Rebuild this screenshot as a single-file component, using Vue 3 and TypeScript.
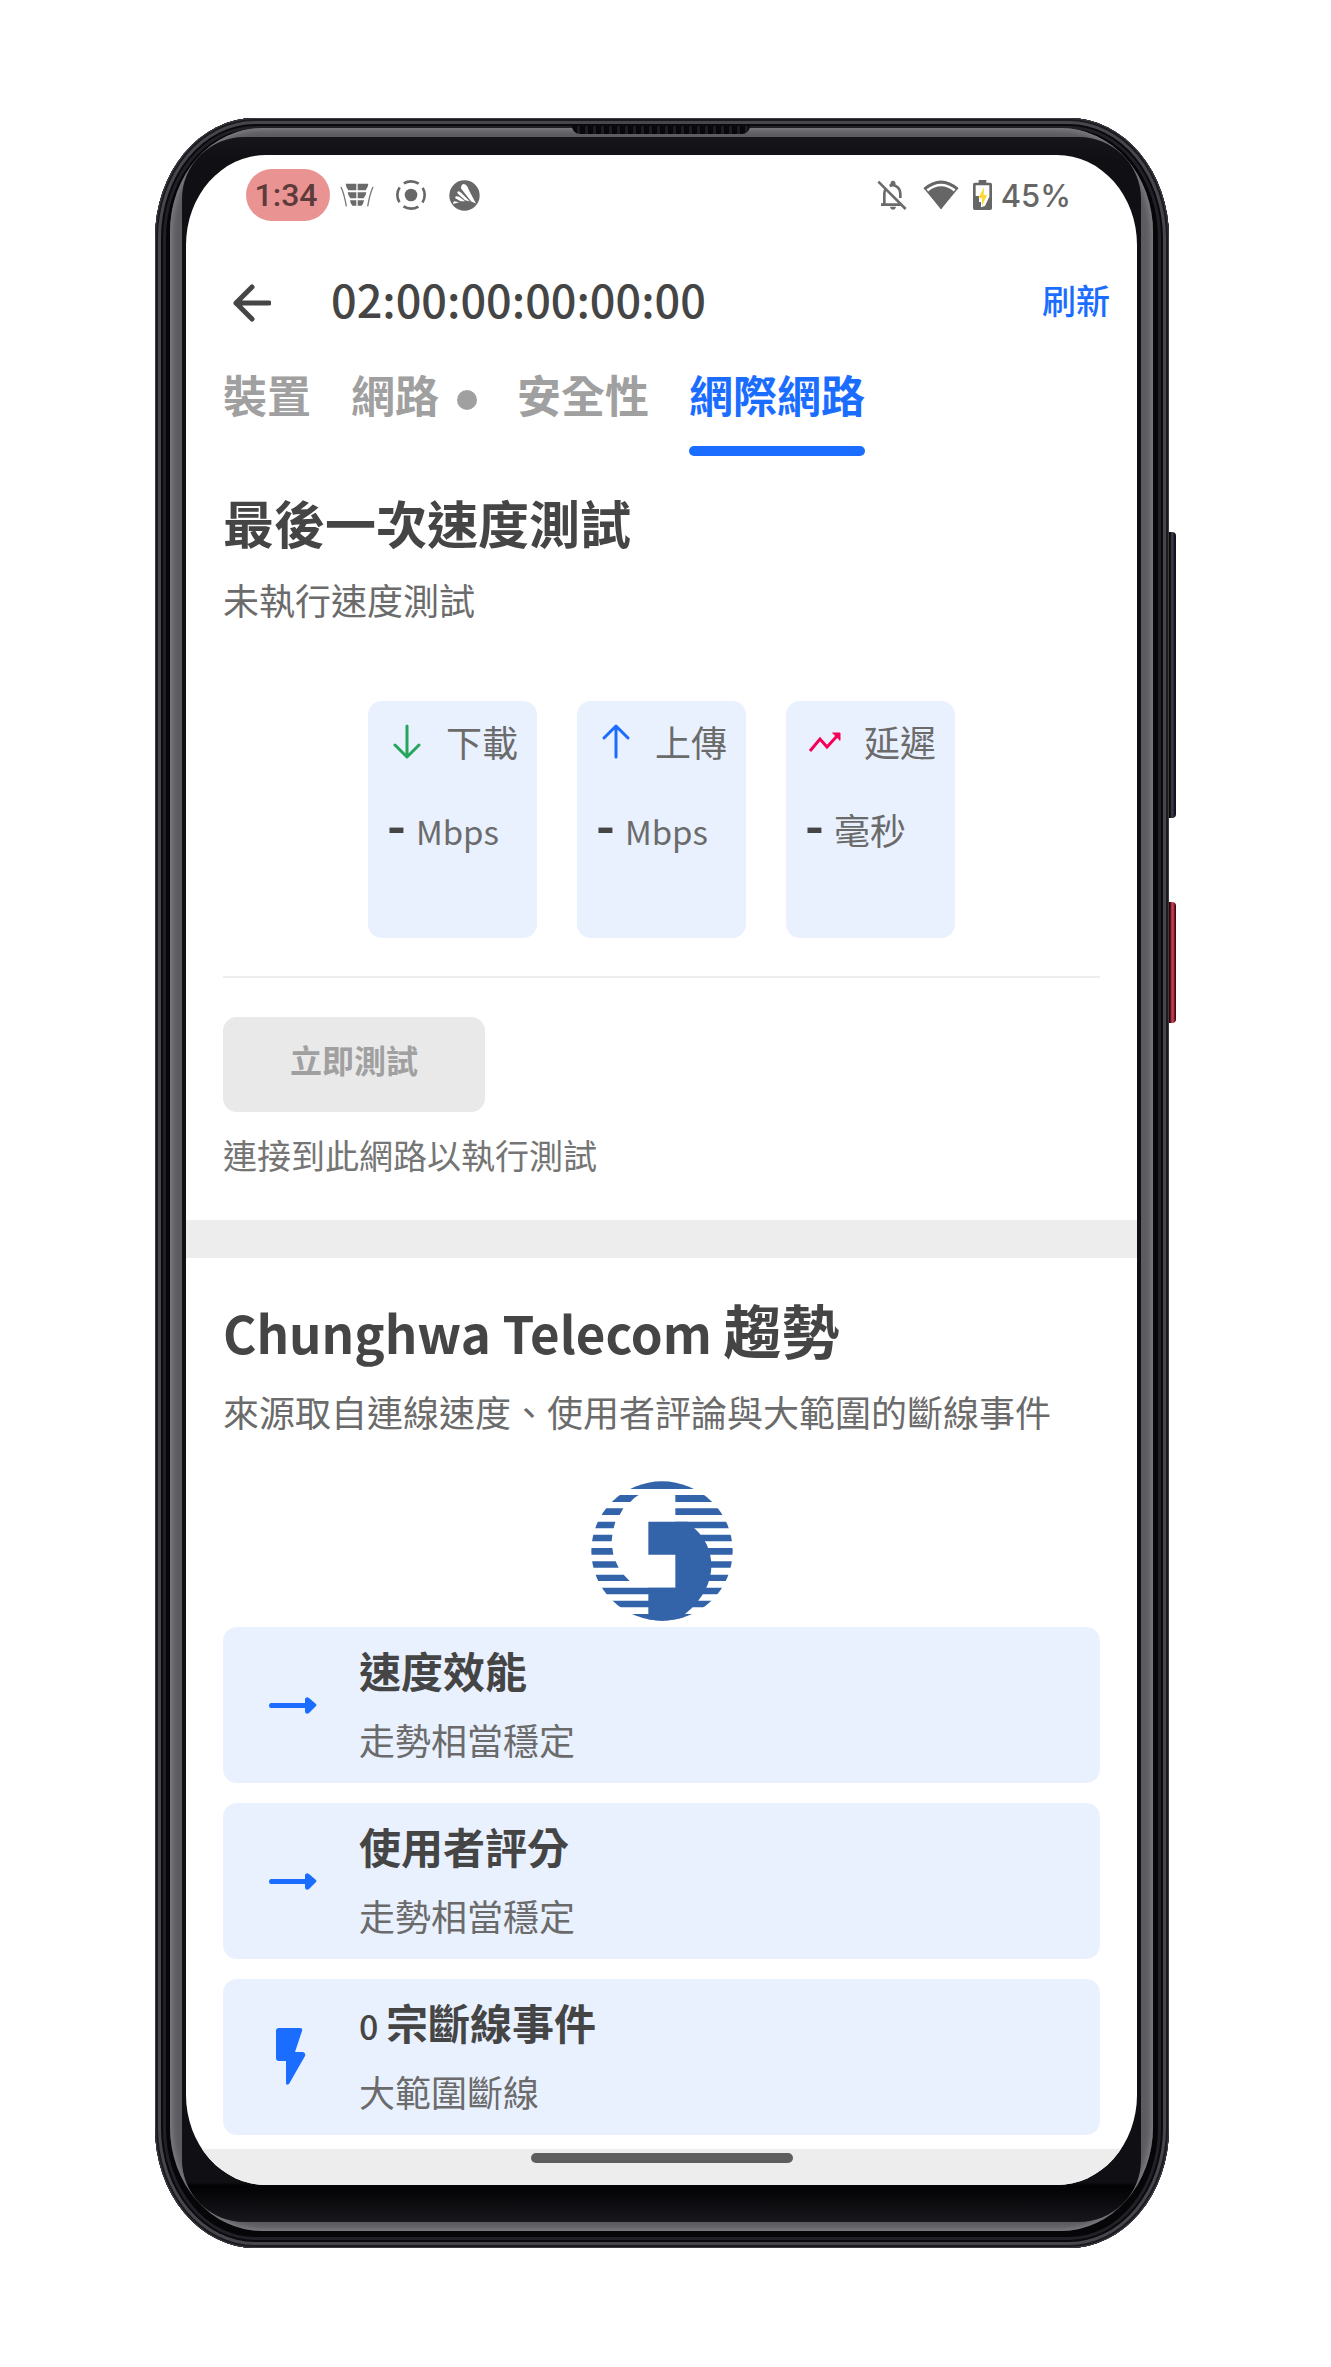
<script setup lang="ts">
interface Tab {
  label: string
  active: boolean
  dot: boolean
}

interface Metric {
  kind: 'down' | 'up' | 'trend'
  label: string
  unit: string
  latin: boolean
}

interface Trend {
  icon: 'arrow' | 'bolt'
  count: string
  title: string
  note: string
}

const tabs: Tab[] = [
  { label: '裝置', active: false, dot: false },
  { label: '網路', active: false, dot: true },
  { label: '安全性', active: false, dot: false },
  { label: '網際網路', active: true, dot: false },
]

const metrics: Metric[] = [
  { kind: 'down', label: '下載', unit: 'Mbps', latin: true },
  { kind: 'up', label: '上傳', unit: 'Mbps', latin: true },
  { kind: 'trend', label: '延遲', unit: '毫秒', latin: false },
]

const trends: Trend[] = [
  { icon: 'arrow', count: '', title: '速度效能', note: '走勢相當穩定' },
  { icon: 'arrow', count: '', title: '使用者評分', note: '走勢相當穩定' },
  { icon: 'bolt', count: '0', title: '宗斷線事件', note: '大範圍斷線' },
]
</script>

<template>
  <div class="stage" lang="zh-Hant">
    <div class="phone">
      <span class="speaker"></span>
      <span class="side volume"></span>
      <span class="side power"></span>
      <div class="rim">
        <div class="bezel">
          <div class="screen">
            <div class="status">
              <span class="clock">1:34</span>
              <svg class="s-vpn" viewBox="0 0 100 72" width="34" height="24" aria-hidden="true">
                <g fill="#6a6a6a">
                  <path d="M16 2H48V22H24Q17 14 16 2ZM52 2H84Q83 14 76 22H52Z" />
                  <path d="M22 28H48V46H30Q23 38 22 28ZM52 28H78Q77 38 70 46H52Z" />
                  <path d="M29 52H48V68H36Q30 62 29 52ZM52 52H71Q70 62 64 68H52Z" />
                </g>
                <path d="M2 12Q12 34 18 70M98 12Q88 34 82 70" fill="none" stroke="#777" stroke-width="4" />
              </svg>
              <svg class="s-rec" viewBox="0 0 90 90" width="30" height="30" aria-hidden="true">
                <circle cx="45" cy="45" r="19" fill="#686868" />
                <circle cx="45" cy="45" r="41" fill="none" stroke="#686868" stroke-width="8" pathLength="360" stroke-dasharray="66 24" stroke-dashoffset="33" />
              </svg>
              <svg class="s-app" viewBox="0 0 92 92" width="31" height="31" aria-hidden="true">
                <circle cx="46" cy="46" r="45" fill="#686868" />
                <path d="M36 20Q38 8 50 14Q55 18 60 32L80 70L66 64L38 28Q34 24 36 20ZM26 34Q30 32 36 38L62 64L48 60L28 42Q22 38 26 34ZM20 49Q24 47 30 50L48 63L34 63L20 55Q16 52 20 49ZM15 63L30 66L12 71Q12 66 15 63Z" fill="#fff" />
              </svg>
              <span class="grow"></span>
              <svg class="s-bell" viewBox="0 0 90 90" width="30" height="30" aria-hidden="true">
                <g fill="none" stroke="#6b6b6b" stroke-width="8">
                  <path d="M4 5L86 87M12 74H74M22 74V40Q22 32 27 26M38 18Q48 12 58 19Q70 26 70 42V54" />
                </g>
                <path d="M40 14Q40 2 48 2T56 14ZM39 80H57Q55 89 48 89T39 80Z" fill="#6b6b6b" />
              </svg>
              <svg class="s-wifi" viewBox="0 0 108 90" width="36" height="30" aria-hidden="true">
                <path d="M4 27Q54 -16 104 27" fill="none" stroke="#666" stroke-width="8" />
                <path d="M2 25L54 88L106 25L98 25Q54 -8 10 25Z" fill="#666" />
                <path d="M13 31Q54 -1 95 31" fill="none" stroke="#fff" stroke-width="8" />
                <path d="M18 40Q54 8 90 40L54 88Z" fill="#666" />
              </svg>
              <svg class="s-batt" viewBox="0 0 57 90" width="19" height="30" aria-hidden="true">
                <path d="M17 0H40V8H52Q57 8 57 14V84Q57 90 52 90H5Q0 90 0 84V14Q0 8 5 8H17Z" fill="#666" />
                <path d="M8 16H49V50L36 78L24 82V66H18V48H8Z" fill="#fff" />
                <path d="M33 22L16 54H27V78L42 45H32Z" fill="#fdd835" />
              </svg>
              <span class="level">45%</span>
            </div>

            <header class="appbar">
              <button class="back" type="button" aria-label="返回">
                <svg viewBox="0 0 38 38" width="38" height="38" aria-hidden="true">
                  <path d="M36 19H3M19 3L3 19L19 35" fill="none" stroke="#454545" stroke-width="5" stroke-linecap="round" stroke-linejoin="round" />
                </svg>
              </button>
              <h1>02:00:00:00:00:00</h1>
              <button class="refresh" type="button">刷新</button>
            </header>

            <nav class="tabs">
              <a v-for="tab in tabs" :key="tab.label" href="#" class="tab" :class="{ active: tab.active }">
                {{ tab.label }}<i v-if="tab.dot" class="dot"></i>
              </a>
            </nav>

            <main>
              <section class="speed">
                <h2>最後一次速度測試</h2>
                <p class="sub">未執行速度測試</p>
                <div class="metrics">
                  <div v-for="m in metrics" :key="m.kind" class="metric">
                    <div class="metric-head">
                      <svg viewBox="0 0 36 36" width="36" height="36" fill="none" stroke-width="3" stroke-linecap="round" stroke-linejoin="round" aria-hidden="true">
                        <path v-if="m.kind === 'down'" d="M20 3V34M8 22L20 34L32 22" stroke="#25a65b" />
                        <path v-else-if="m.kind === 'up'" d="M20 34V3M8 15L20 3L32 15" stroke="#1a6dff" />
                        <g v-else stroke="#f50057">
                          <path d="M5 28L15 16L22 24L32 13" stroke-linecap="butt" stroke-linejoin="miter" />
                          <path d="M28 10H35V17Z" fill="#f50057" stroke-width="1" />
                        </g>
                      </svg>
                      <span>{{ m.label }}</span>
                    </div>
                    <div class="metric-value"><b>-</b><span :class="{ latin: m.latin }">{{ m.unit }}</span></div>
                  </div>
                </div>
                <hr />
                <button class="run" type="button" disabled>立即測試</button>
                <p class="hint">連接到此網路以執行測試</p>
              </section>

              <section class="trends">
                <h2 class="provider"><span>Chunghwa Telecom </span>趨勢</h2>
                <p class="sub">來源取自連線速度、使用者評論與大範圍的斷線事件</p>
                <svg class="logo" viewBox="90 62 426 420" width="142" height="140" role="img" aria-label="Chunghwa Telecom">
                  <defs>
                    <clipPath id="globe"><ellipse cx="303" cy="272" rx="212" ry="209" /></clipPath>
                  </defs>
                  <g clip-path="url(#globe)" fill="#3364aa">
                    <path d="M90 62H516V86H90Z" />
                    <path d="M90 104H233Q218 112 208 125H90ZM90 144H187L176 164H90ZM90 184H163L158 204H90ZM90 223H154L152 243H90ZM90 263H154L157 283H90ZM90 303H164L173 322H90ZM90 343H188L206 362H90ZM90 382H343V402H90ZM90 421H300V441H90ZM90 461H300V482H90Z" />
                    <path d="M343 104H516V125H343ZM343 144H516V164H343ZM343 184H516V204H343ZM400 223H516V243H400ZM430 263H516V283H430ZM430 303H516V322H430ZM430 343H516V362H430ZM420 382H516V402H420ZM390 421H516V441H390ZM300 461H516V482H300Z" />
                    <path d="M262 184H380L400 204C470 265 475 380 372 461V482H262V382H343V283H262Z" />
                  </g>
                </svg>
                <ul>
                  <li v-for="t in trends" :key="t.title">
                    <svg viewBox="0 0 60 60" width="60" height="60" fill="#1a6dff" aria-hidden="true">
                      <path v-if="t.icon === 'arrow'" d="M9 28H43V24Q44 21 47 23L54 29Q55 30 54 31L47 38Q44 40 43 37V33H9Q7 33 7 30.5T9 28Z" />
                      <path v-else d="M17 1H38Q41 1 40 4L33 25H41Q44 26 43 29L27 57Q24 59 24 56V34H17Q14 34 14 31V4Q14 1 17 1Z" />
                    </svg>
                    <div>
                      <h3><span v-if="t.count" class="count">{{ t.count }}&nbsp;</span>{{ t.title }}</h3>
                      <p>{{ t.note }}</p>
                    </div>
                  </li>
                </ul>
              </section>
            </main>
            <footer><span class="home"></span></footer>
          </div>
        </div>
      </div>
    </div>
  </div>
</template>

<style>
body {
  margin: 0;
  background: #fff;
}
</style>

<style scoped>
.stage {
  padding: 118px 162px 118px 155px;
  font-family: "Noto Sans CJK TC", sans-serif;
  color: #454545;
}

.phone {
  position: relative;
  padding: 10px 16px 17px 15px;
  border-radius: 100px / 120px;
  background: #060608;
  box-shadow:
    inset 0 0 0 1px #3c3c42,
    inset 0 0 0 3px #1a1a1f,
    inset 0 0 0 6px #46464c,
    inset 0 0 0 8px #0a0a0d,
    inset 0 0 0 11px #202027;
}

.rim {
  padding: 9px 12px;
  border-radius: 92px / 104px;
  background: #5b5b60;
  box-shadow: inset 0 0 6px 2px #838388;
}

.bezel {
  padding: 18px 4px 37px;
  border-radius: 62px;
  background: linear-gradient(#16151a 0, #101014 24px, #101014 calc(100% - 40px), #020204 calc(100% - 36px), #18171c 100%);
}

.screen {
  overflow: hidden;
  border-radius: 80px / 90px;
  background: #fff;
}

.speaker {
  position: absolute;
  top: 8px;
  left: 50%;
  width: 178px;
  height: 8px;
  margin-left: -90px;
  border-radius: 0 0 8px 8px;
  background: repeating-linear-gradient(90deg, #08080b 0 5px, #1b1b21 5px 8px);
}

.side {
  position: absolute;
  left: 100%;
  width: 7px;
  border-radius: 0 4px 4px 0;
}

.volume {
  top: 414px;
  height: 286px;
  background: linear-gradient(90deg, #08080b 0 1px, #43424a 3px, #120c20 6px);
}

.power {
  top: 784px;
  height: 121px;
  background: linear-gradient(90deg, #2a060c 0 1px, #cf4052 3px, #a92c40 5px, #3a0a12 6px);
}

button {
  padding: 0;
  border: 0;
  background: none;
  font: inherit;
}

h1, h2, h3, p, ul {
  margin: 0;
  padding: 0;
}

svg {
  display: block;
  flex: none;
}

.status {
  display: flex;
  align-items: center;
  height: 52px;
  padding: 14px 66px 0 60px;
  font-family: Roboto, sans-serif;
  font-size: 32px;
  font-weight: 500;
}

.clock {
  box-sizing: border-box;
  width: 84px;
  padding-right: 4px;
  border-radius: 26px;
  background: #ea9393;
  color: #5d3b3b;
  line-height: 52px;
  text-align: center;
}

.s-vpn { margin-left: 10px; }
.s-rec { margin-left: 22px; }
.s-app { margin-left: 23px; }
.s-wifi { margin-left: 16px; }
.s-batt { margin-left: 14px; }

.grow { flex: 1; }

.level {
  margin-left: 9px;
  color: #666;
  font-family: Inter, sans-serif;
  font-size: 31px;
}

.appbar {
  display: flex;
  align-items: center;
  height: 60px;
  margin-top: 52px;
  padding: 0 27px 0 47px;
}

h1 {
  flex: 1;
  margin-left: 60px;
  padding-bottom: 8px;
  font-size: 45px;
  font-weight: 500;
  line-height: 52px;
}

.refresh {
  padding-bottom: 6px;
  color: #1a6dff;
  font-size: 34px;
  font-weight: 500;
  line-height: 52px;
}

.tabs {
  display: flex;
  gap: 40px;
  margin-top: 31px;
  padding: 0 37px;
}

.tab {
  display: flex;
  align-items: center;
  padding-bottom: 22px;
  border-bottom: 10px solid transparent;
  color: #a0a0a0;
  font-size: 44px;
  font-weight: 700;
  line-height: 60px;
  text-decoration: none;
  white-space: nowrap;
}

.tab.active {
  position: relative;
  color: #1a6dff;
}

.tab.active::after {
  content: "";
  position: absolute;
  right: 0;
  bottom: -10px;
  left: 0;
  height: 10px;
  border-radius: 5px;
  background: #1a6dff;
}

.dot {
  width: 20px;
  height: 20px;
  margin: 12px 0 0 18px;
  border-radius: 50%;
  background: #a0a0a0;
}

.speed {
  padding: 36px 37px 40px;
}

h2 {
  font-size: 51px;
  font-weight: 700;
  line-height: 60px;
}

.sub {
  margin-top: 22px;
  color: #6b6b6b;
  font-size: 36px;
  line-height: 50px;
}

.metrics {
  display: flex;
  justify-content: center;
  gap: 40px;
  margin-top: 77px;
}

.metric {
  box-sizing: border-box;
  width: 169px;
  height: 237px;
  padding: 15px 19px 0;
  border-radius: 14px;
  background: #e9f1ff;
  color: #6b6b6b;
  font-size: 36px;
  line-height: 50px;
}

.metric-head {
  display: flex;
  align-items: center;
  justify-content: space-between;
}

.metric-value {
  display: flex;
  align-items: baseline;
  gap: 10px;
  margin-top: 32px;
}

.metric-value b {
  font-size: 51px;
  font-weight: 700;
  color: #454545;
}

.latin {
  font-size: 33px;
}

hr {
  height: 2px;
  margin: 38px 0 39px;
  border: 0;
  background: #ededed;
}

.run {
  display: block;
  width: 262px;
  height: 95px;
  padding-bottom: 12px;
  border-radius: 14px;
  background: #e9e9e9;
  color: #a0a0a0;
  font-size: 32px;
  font-weight: 700;
}

.hint {
  margin-top: 18px;
  color: #757575;
  font-size: 34px;
  line-height: 50px;
}

.trends {
  padding: 31px 37px 14px;
  border-top: 38px solid #ededed;
}

.provider {
  font-size: 58px;
  line-height: 80px;
}

.provider span {
  font-size: 51px;
  line-height: 1;
}

.trends .sub {
  margin-top: 17px;
}

.logo {
  margin: 45px auto 6px;
}

ul {
  display: flex;
  flex-direction: column;
  gap: 20px;
  list-style: none;
}

li {
  display: flex;
  align-items: center;
  gap: 37px;
  height: 156px;
  padding-left: 39px;
  border-radius: 14px;
  background: #e9f1ff;
}

h3 {
  font-size: 42px;
  font-weight: 700;
  line-height: 60px;
}

.count {
  font-size: 34px;
  font-weight: 500;
  line-height: 1;
}

li p {
  margin-top: 14px;
  color: #6b6b6b;
  font-size: 36px;
  line-height: 50px;
}

li div {
  padding-bottom: 6px;
}

footer {
  display: flex;
  justify-content: center;
  height: 32px;
  padding-top: 4px;
  background: #ededed;
}

.home {
  width: 262px;
  height: 10px;
  border-radius: 5px;
  background: #5e5e5e;
}
</style>
